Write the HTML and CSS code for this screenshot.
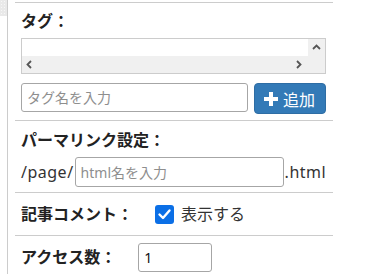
FILE: index.html
```html
<!DOCTYPE html>
<html lang="ja">
<head>
    <meta charset="UTF-8">
    <meta name="viewport" content="width=device-width, initial-scale=1.0">
    <title>記事設定</title>
    <link rel="stylesheet" href="styles.css">
</head>
<body>
    <div class="page">
        <div class="rail"><div class="rail-top"></div></div>

        <div class="panel">
            <section class="field field-tags">
                <h3 class="label">タグ：</h3>
                <div class="tagbox">
                    <div class="tagbox-list"></div>
                    <div class="vbar">
                        <svg width="9" height="6" viewBox="0 0 9 6"><path d="M1 5 L4.5 1.5 L8 5" fill="none" stroke="#555" stroke-width="1.8"/></svg>
                    </div>
                    <div class="hbar">
                        <svg width="6" height="9" viewBox="0 0 6 9"><path d="M5 1 L1.5 4.5 L5 8" fill="none" stroke="#555" stroke-width="1.8"/></svg>
                        <svg width="6" height="9" viewBox="0 0 6 9"><path d="M1 1 L4.5 4.5 L1 8" fill="none" stroke="#555" stroke-width="1.8"/></svg>
                    </div>
                    <div class="corner"></div>
                </div>
                <div class="tag-add">
                    <input type="text" class="text-input tag-input" placeholder="タグ名を入力">
                    <button class="btn-add">
                        <svg width="14" height="14" viewBox="0 0 14 14"><rect x="5" y="0" width="4" height="14" fill="#fff"/><rect x="0" y="5" width="14" height="4" fill="#fff"/></svg>
                        <span>追加</span>
                    </button>
                </div>
            </section>

            <section class="field field-permalink">
                <h3 class="label">パーマリンク設定：</h3>
                <div class="permalink">
                    <span class="affix">/page/</span>
                    <input type="text" class="text-input html-input" placeholder="html名を入力">
                    <span class="affix">.html</span>
                </div>
            </section>

            <section class="field field-inline field-comment">
                <h3 class="label">記事コメント：</h3>
                <label class="check-row">
                    <span class="check">
                        <svg width="15" height="15" viewBox="0 0 15 15"><path d="M2.5 7.5 L6 11 L12.5 3.5" fill="none" stroke="#fff" stroke-width="2.4" stroke-linecap="round" stroke-linejoin="round"/></svg>
                    </span>
                    <span>表示する</span>
                </label>
            </section>

            <section class="field field-inline field-count">
                <h3 class="label">アクセス数：</h3>
                <input type="text" class="text-input count-input" value="1">
            </section>
        </div>
    </div>
</body>
</html>
```

FILE: styles.css
```css
* {
    margin: 0;
    padding: 0;
    box-sizing: border-box;
}

body {
    font-family: "Noto Sans", "Noto Sans CJK JP", sans-serif;
    font-size: 16px;
    color: #333;
    background: #fff;
    overflow: hidden;
}

.page {
    display: flex;
    height: 274px;
}

.rail {
    width: 8px;
    border-right: 1px solid #ccc;
    flex-shrink: 0;
}

.rail-top {
    height: 16px;
    width: 7px;
    background-color: #e9e9e9;
    background-image: radial-gradient(#f7f7f7 0.8px, transparent 1px);
    background-size: 3px 3px;
}

.panel {
    margin-left: 7px;
    width: 318px;
}

.field {
    border-top: 1px solid #ccc;
    padding: 0 6px;
}

.label {
    font-size: 16px;
    font-weight: bold;
    line-height: 23px;
    color: #222;
}

/* tags */
.field-tags {
    margin-top: 2px;
    padding-top: 7px;
    padding-bottom: 6px;
}

.tagbox {
    margin-top: 5px;
    width: 305px;
    border: 1px solid #ccc;
    display: grid;
    grid-template-columns: 1fr 17px;
    grid-template-rows: 17px 17px;
}

.tagbox-list {
    background: #fff;
}

.vbar {
    background: #f0f0f0;
    display: flex;
    justify-content: center;
    padding-top: 5px;
}

.hbar {
    background: #f0f0f0;
    display: flex;
    justify-content: space-between;
    align-items: center;
    padding: 0 6px 0 4px;
}

.corner {
    background: #f0f0f0;
}

.tag-add {
    margin-top: 9px;
    display: flex;
    align-items: flex-start;
    gap: 6px;
}

.text-input {
    border: 1px solid #a6a6a6;
    border-radius: 3px;
    font-family: inherit;
    font-size: 14px;
    color: #111;
    padding: 0 5px;
    outline: none;
}

.text-input::placeholder {
    color: #8e8e8e;
}

.tag-input {
    width: 227px;
    height: 29px;
}

.btn-add {
    width: 72px;
    height: 31px;
    background-color: #337ab7;
    border: 1px solid #2e6da4;
    border-radius: 4px;
    color: #fff;
    font-family: inherit;
    font-size: 16px;
    display: flex;
    align-items: center;
    padding-left: 9px;
    gap: 5px;
}

/* permalink */
.field-permalink {
    padding-top: 8px;
    padding-bottom: 5px;
}

.permalink {
    margin-top: 5px;
    display: flex;
    align-items: center;
    gap: 1px;
    line-height: 23px;
}

.affix {
    letter-spacing: 0.5px;
}

.html-input {
    width: 209px;
    height: 30px;
}

/* inline rows */
.field-inline {
    display: flex;
    align-items: center;
}

.field-comment {
    padding-top: 10px;
    padding-bottom: 9px;
    gap: 22px;
}

.check-row {
    display: flex;
    align-items: center;
    gap: 7px;
    line-height: 23px;
}

.check {
    width: 19px;
    height: 19px;
    border-radius: 3px;
    background: #0b6fe6;
    display: flex;
    align-items: center;
    justify-content: center;
}

.field-count {
    padding-top: 7px;
    gap: 22px;
    align-items: flex-start;
}

.field-count .label {
    margin-top: 3px;
}

.count-input {
    width: 74px;
    height: 29px;
}
```
